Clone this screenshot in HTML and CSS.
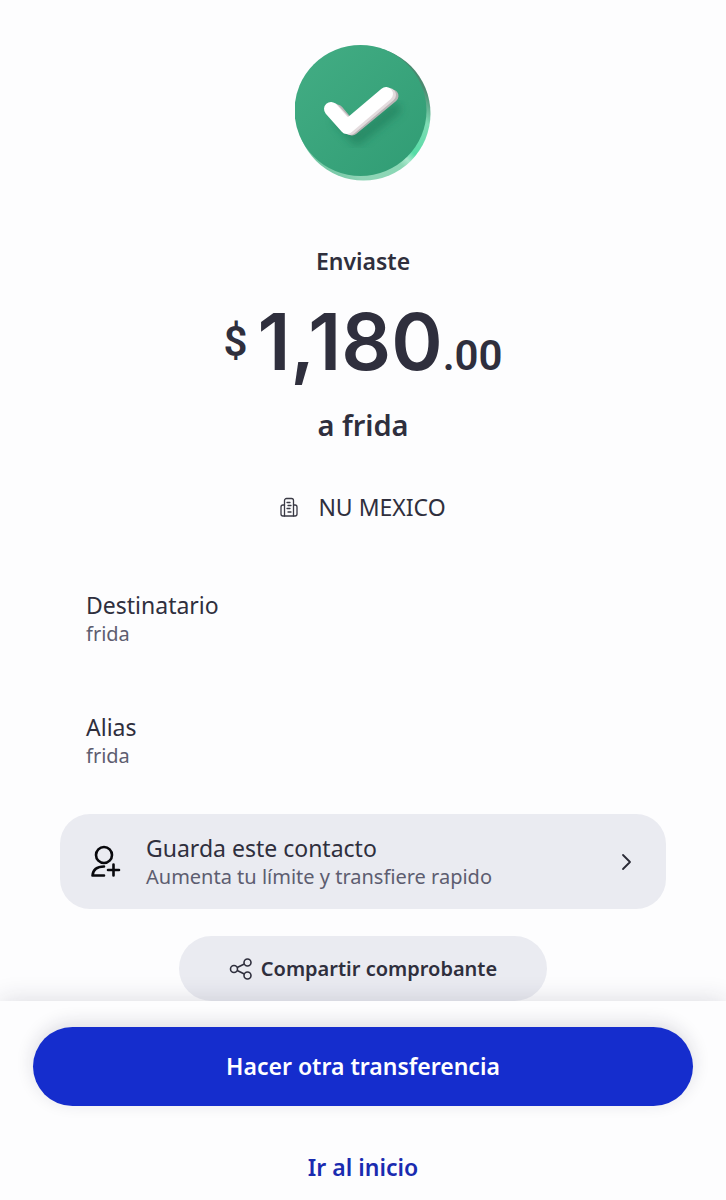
FILE: index.html
```html
<!DOCTYPE html>
<html lang="es">

<head>
    <meta charset="UTF-8" />
    <meta name="viewport" content="width=device-width, initial-scale=1" />
    <title>Transferencia enviada</title>
    <link rel="stylesheet" href="styles.css">
</head>

<body>

    <!-- RECEIPT -->
    <main>
        <svg class="success-icon" viewBox="0 0 136 136" aria-hidden="true">
            <defs>
                <linearGradient id="rim" x1="0" y1="1" x2="1" y2="0">
                    <stop offset="0" stop-color="#4fb48c" />
                    <stop offset="0.25" stop-color="#8fd4b6" />
                    <stop offset="0.45" stop-color="#8ad8b5" />
                    <stop offset="0.49" stop-color="#a9e8cc" />
                    <stop offset="0.54" stop-color="#55dca6" />
                    <stop offset="0.7" stop-color="#7fdcb5" />
                    <stop offset="0.82" stop-color="#4b8a70" />
                    <stop offset="1" stop-color="#3f7f66" />
                </linearGradient>
                <linearGradient id="face" x1="0" y1="0" x2="1" y2="1">
                    <stop offset="0" stop-color="#43ad84" />
                    <stop offset="1" stop-color="#309c74" />
                </linearGradient>
                <filter id="soft" x="-30%" y="-30%" width="160%" height="160%">
                    <feGaussianBlur stdDeviation="4" />
                </filter>
            </defs>
            <circle cx="68.500" cy="68.500" r="67" fill="url(#rim)" />
            <ellipse cx="65.500" cy="65.500" rx="66" ry="65.500" fill="url(#face)" />
            <path d="M45 76l17 18 38-30" fill="none" stroke="#1d7a58" stroke-width="12" stroke-linecap="round" stroke-linejoin="round" opacity="0.6" filter="url(#soft)" />
            <path d="M42 66l15 18 40-33" fill="none" stroke="#b9b5b6" stroke-width="13" stroke-linecap="round" stroke-linejoin="round" />
            <path d="M38 65l17 18 39-33" fill="none" stroke="#e4dcde" stroke-width="14" stroke-linecap="round" stroke-linejoin="round" />
            <path d="M36 64l16 18 39-33" fill="none" stroke="#fff" stroke-width="14" stroke-linecap="round" stroke-linejoin="round" />
        </svg>

        <h1>Enviaste</h1>
        <div class="amount">
            <span class="currency">$</span>
            <span class="units">1,180</span>
            <span class="cents">.00</span>
        </div>
        <p class="recipient">a frida</p>

        <div class="bank">
            <svg width="18" height="20" viewBox="0 0 18 20" fill="none" stroke="#3a3a45" stroke-width="1.3" stroke-linecap="round" stroke-linejoin="round" aria-hidden="true">
                <path d="M4.500 19V3.500a2 2 0 0 1 2-2h5a2 2 0 0 1 2 2V19z" />
                <path d="M4.500 8H3a2 2 0 0 0-2 2v7a2 2 0 0 0 2 2h1.500M13.500 8H15a2 2 0 0 1 2 2v7a2 2 0 0 1-2 2h-1.500" />
                <path d="M7 5.500h3M8 8.500h3M7 11.500h3M8 15h3" />
            </svg>
            <span>NU MEXICO</span>
        </div>

        <dl class="details">
            <div class="detail">
                <dt>Destinatario</dt>
                <dd>frida</dd>
            </div>
            <div class="detail">
                <dt>Alias</dt>
                <dd>frida</dd>
            </div>
        </dl>

        <button type="button" class="save-contact">
            <svg width="32" height="34" viewBox="0 0 32 34" fill="none" stroke="#08080c" stroke-width="2.6" stroke-linecap="round" stroke-linejoin="round" aria-hidden="true">
                <circle cx="14" cy="10" r="8" />
                <path d="M14 21.500C7 21.500 3 25 2.500 30.500H14" />
                <path d="M18 25H29M23.500 19.500v11" />
            </svg>
            <span class="save-text">
                <span class="save-title">Guarda este contacto</span>
                <span class="save-note">Aumenta tu límite y transfiere rapido</span>
            </span>
            <svg width="12" height="18" viewBox="0 0 12 18" fill="none" stroke="#2a2a36" stroke-width="1.8" stroke-linecap="round" stroke-linejoin="round" aria-hidden="true">
                <path d="M3 2l7 7-7 7" />
            </svg>
        </button>

        <button type="button" class="share">
            <svg width="24" height="24" viewBox="0 0 24 24" fill="none" stroke="#2f2f3d" stroke-width="1.6" aria-hidden="true">
                <circle cx="5" cy="12" r="3.500" />
                <circle cx="18.500" cy="5.500" r="3.500" />
                <circle cx="18.500" cy="18.500" r="3.500" />
                <path d="M8.200 10.500l7.100-3.500M8.200 13.500l7.100 3.500" />
            </svg>
            Compartir comprobante
        </button>
    </main>

    <!-- ACTIONS -->
    <footer class="actions">
        <button type="button" class="primary">Hacer otra transferencia</button>
        <a href="#" class="home-link">Ir al inicio</a>
    </footer>

</body>

</html>
```
FILE: styles.css
```css
* {
    box-sizing: border-box;
}

body {
    margin: 0;
    min-height: 100vh;
    display: flex;
    flex-direction: column;
    font-family: "Noto Sans", sans-serif;
    background: #fdfdfe;
    color: #2f2f3d;
}

button {
    border: none;
    font-family: inherit;
    color: inherit;
    cursor: pointer;
}

/* --- RECEIPT --- */
main {
    flex: 1;
    display: flex;
    flex-direction: column;
    align-items: center;
    padding: 45px 60px 0;
}

.success-icon {
    width: 136px;
    height: 136px;
}

h1 {
    margin: 64px 0 0;
    font-size: 23px;
    line-height: 32px;
    font-weight: 600;
}

.amount {
    display: flex;
    align-items: baseline;
    margin-top: 17px;
    font-family: Roboto, sans-serif;
    font-weight: 600;
}

.currency {
    align-self: center;
    margin-right: 10px;
    font-size: 42px;
    line-height: 48px;
}

.units {
    font-family: Inter, sans-serif;
    font-size: 78px;
    line-height: 96px;
}

.cents {
    font-size: 42px;
    line-height: 48px;
}

.recipient {
    margin: 15px 0 0;
    font-size: 29px;
    line-height: 40px;
    font-weight: 600;
}

.bank {
    display: flex;
    align-items: center;
    gap: 20px;
    margin-top: 46px;
    font-size: 23px;
    line-height: 32px;
}

.details {
    align-self: stretch;
    display: flex;
    flex-direction: column;
    gap: 64px;
    margin: 67px 0 0;
    padding: 0 26px;
}

dt,
.save-title {
    font-size: 23px;
    line-height: 30px;
}

dd,
.save-note {
    margin: 0;
    font-size: 20px;
    line-height: 28px;
    color: #5d5d70;
}

.save-contact {
    align-self: stretch;
    display: flex;
    align-items: center;
    gap: 24px;
    margin-top: 44px;
    padding: 19px 34px 18px 30px;
    border-radius: 30px;
    background: #eaebf1;
    text-align: left;
}

.save-text {
    flex: 1;
    display: flex;
    flex-direction: column;
}

.share {
    display: flex;
    align-items: center;
    gap: 8px;
    margin-top: 27px;
    padding: 16px 50px;
    border-radius: 33px;
    background: #eaebf1;
    font-size: 20px;
    line-height: 33px;
    font-weight: 600;
}

/* --- ACTIONS --- */
.actions {
    position: sticky;
    bottom: 0;
    display: flex;
    flex-direction: column;
    align-items: center;
    padding: 26px 33px 17px;
    background: #fdfdfe;
    box-shadow: 0 0 24px rgba(30, 30, 60, 0.16);
}

.primary {
    align-self: stretch;
    padding: 23px;
    border-radius: 40px;
    background: #152dcd;
    box-shadow: 0 -4px 18px rgba(30, 30, 60, 0.14);
    color: white;
    font-size: 23px;
    line-height: 33px;
    font-weight: 600;
}

.home-link {
    margin-top: 45px;
    color: #1a2bb0;
    font-size: 23px;
    line-height: 32px;
    font-weight: 600;
    text-decoration: none;
}
```
